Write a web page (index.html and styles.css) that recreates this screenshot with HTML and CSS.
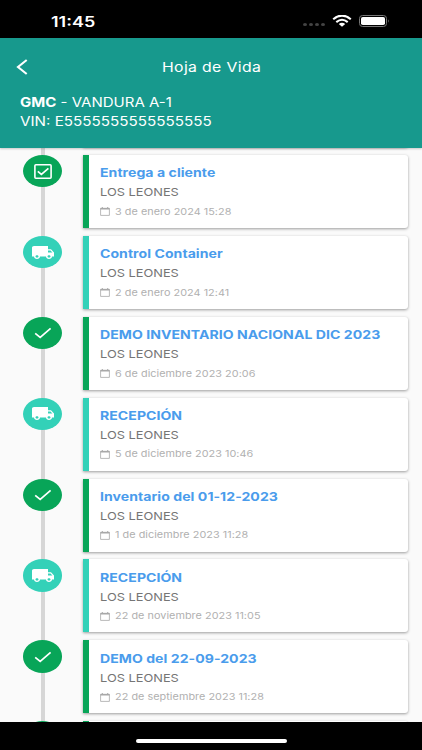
FILE: index.html
```
<!DOCTYPE html>
<html lang="es">
<head>
    <title>Hoja de Vida</title>
    <meta charset="UTF-8">
    <meta name="viewport" content="width=device-width, initial-scale=1.0">
    <link rel="stylesheet" href="styles.css">
</head>
<body>
    <!-- icons -->
    <svg class="sprite">
        <symbol id="calendar" viewBox="0 0 10 9">
            <path d="M.6 1.3h8.800v7.100H.6z" fill="none" stroke="#a8a8a8" stroke-width=".8"/>
            <path d="M.5 1h9v1.600h-9zM1.800 0h1v1.300h-1zM7.200 0h1v1.300h-1z" fill="#a8a8a8"/>
        </symbol>
        <symbol id="box" viewBox="0 0 18 15">
            <rect x=".9" y=".8" width="16.2" height="13.4" rx="1" fill="none" stroke="#fff" stroke-width="1.6"/>
            <path d="M3.800 7.400l3.600 3.100 7-6.100" fill="none" stroke="#fff" stroke-width="1.700"/>
        </symbol>
        <symbol id="check" viewBox="0 0 18 12">
            <path d="M1.200 6.300l5 4.200L16.600 1.400" fill="none" stroke="#fff" stroke-width="1.700"/>
        </symbol>
        <symbol id="truck" viewBox="1 4 22 16" preserveAspectRatio="none">
            <path fill="#fff" d="M20 8h-3V4H3c-1.100 0-2 .9-2 2v11h2c0 1.660 1.340 3 3 3s3-1.340 3-3h6c0 1.660 1.340 3 3 3s3-1.340 3-3h2v-5l-3-4zM6 18.500c-.83 0-1.500-.67-1.500-1.500s.67-1.500 1.500-1.500 1.500.67 1.500 1.500-.67 1.500-1.500 1.500zm13.500-9l1.960 2.500H17V9.500h2.500zm-1.500 9c-.83 0-1.500-.67-1.500-1.500s.67-1.500 1.500-1.500 1.500.67 1.500 1.500-.67 1.500-1.500 1.500z"/>
        </symbol>
    </svg>

    <div class="status-bar">
        <span class="clock">11:45</span>
        <div class="status-icons">
            <div class="signal"><i></i><i></i><i></i><i></i></div>
            <svg class="wifi" width="20" height="12" viewBox="0 0 20 12">
                <path d="M1.200 4.200Q10-3 18.800 4.200M4.300 7.100Q10 2.400 15.700 7.100" fill="none" stroke="#fff" stroke-width="2.100"/>
                <path d="M6.800 9Q10 6.500 13.200 9L10 11.800z" fill="#fff"/>
            </svg>
            <svg class="battery" width="31" height="12" viewBox="0 0 31 12">
                <rect x=".5" y=".5" width="27" height="11" rx="3" fill="none" stroke="#777"/>
                <rect x="2" y="2" width="24" height="8" rx="1.800" fill="#fff"/>
                <path d="M29 4.300q1.600 1.700 0 3.400z" fill="#777"/>
            </svg>
        </div>
    </div>

    <header class="header">
        <div class="nav">
            <svg class="back" width="12" height="16" viewBox="0 0 12 16">
                <path d="M10.700 1L2 8l8.700 7" fill="none" stroke="#fff" stroke-width="2.100"/>
            </svg>
            <h1>Hoja de Vida</h1>
        </div>
        <div class="vehicle">
            <p class="model"><b>GMC</b> - VANDURA A-1</p>
            <p class="vin">VIN: E5555555555555555</p>
        </div>
    </header>

    <main class="timeline">
        <div class="item">
            <div class="dot green"></div>
            <div class="card green"></div>
        </div>
        <div class="item">
            <div class="dot green"><svg width="18" height="15"><use href="#box"/></svg></div>
            <div class="card green">
                <h2>Entrega a cliente</h2>
                <p class="place">LOS LEONES</p>
                <div class="date"><svg width="10" height="9"><use href="#calendar"/></svg><span>3 de enero 2024 15:28</span></div>
            </div>
        </div>
        <div class="item">
            <div class="dot teal"><svg width="22" height="13"><use href="#truck"/></svg></div>
            <div class="card teal">
                <h2>Control Container</h2>
                <p class="place">LOS LEONES</p>
                <div class="date"><svg width="10" height="9"><use href="#calendar"/></svg><span>2 de enero 2024 12:41</span></div>
            </div>
        </div>
        <div class="item">
            <div class="dot green"><svg width="18" height="12"><use href="#check"/></svg></div>
            <div class="card green">
                <h2>DEMO INVENTARIO NACIONAL DIC 2023</h2>
                <p class="place">LOS LEONES</p>
                <div class="date"><svg width="10" height="9"><use href="#calendar"/></svg><span>6 de diciembre 2023 20:06</span></div>
            </div>
        </div>
        <div class="item">
            <div class="dot teal"><svg width="22" height="13"><use href="#truck"/></svg></div>
            <div class="card teal">
                <h2>RECEPCIÓN</h2>
                <p class="place">LOS LEONES</p>
                <div class="date"><svg width="10" height="9"><use href="#calendar"/></svg><span>5 de diciembre 2023 10:46</span></div>
            </div>
        </div>
        <div class="item">
            <div class="dot green"><svg width="18" height="12"><use href="#check"/></svg></div>
            <div class="card green">
                <h2>Inventario del 01-12-2023</h2>
                <p class="place">LOS LEONES</p>
                <div class="date"><svg width="10" height="9"><use href="#calendar"/></svg><span>1 de diciembre 2023 11:28</span></div>
            </div>
        </div>
        <div class="item">
            <div class="dot teal"><svg width="22" height="13"><use href="#truck"/></svg></div>
            <div class="card teal">
                <h2>RECEPCIÓN</h2>
                <p class="place">LOS LEONES</p>
                <div class="date"><svg width="10" height="9"><use href="#calendar"/></svg><span>22 de noviembre 2023 11:05</span></div>
            </div>
        </div>
        <div class="item">
            <div class="dot green"><svg width="18" height="12"><use href="#check"/></svg></div>
            <div class="card green">
                <h2>DEMO del 22-09-2023</h2>
                <p class="place">LOS LEONES</p>
                <div class="date"><svg width="10" height="9"><use href="#calendar"/></svg><span>22 de septiembre 2023 11:28</span></div>
            </div>
        </div>
        <div class="item">
            <div class="dot green"></div>
            <div class="card green"></div>
        </div>
    </main>

    <div class="home-bar"><div class="home-indicator"></div></div>
</body>
</html>
```
FILE: styles.css
```
* {
    box-sizing: border-box;
}
body {
    margin: 0;
    height: 750px;
    overflow: hidden;
    display: flex;
    flex-direction: column;
    background-color: #fafafa;
    font-family: 'Inter', sans-serif;
}
h1, h2, p {
    margin: 0;
}
svg {
    display: block;
    flex: none;
}
.sprite {
    position: absolute;
    width: 0;
    height: 0;
}

/* wide lettering */
.clock, h1, h2, .model, .vin, .place, .date span {
    width: max-content;
    white-space: nowrap;
    transform: scaleX(1.2);
    transform-origin: left center;
}

.status-bar {
    flex: none;
    height: 38px;
    padding: 4px 32px 0 51px;
    display: flex;
    justify-content: space-between;
    align-items: center;
    background-color: #000;
    color: #fff;
}
.clock {
    font-size: 14.5px;
    font-weight: 600;
    transform: scaleX(1.24);
}
.status-icons {
    display: flex;
    align-items: center;
}
.signal {
    display: flex;
    gap: 2px;
    margin: 7px 7px 0 0;
}
.signal i {
    width: 4px;
    height: 3px;
    border-radius: 50%;
    background-color: #444;
}
.wifi {
    margin-right: 7px;
}

.header {
    flex: none;
    height: 109.5px;
    background-color: #17998d;
    color: #fff;
    position: relative;
    z-index: 1;
    box-shadow: 0 1px 2px rgba(0, 0, 0, 0.2);
}
.nav {
    height: 55px;
    display: flex;
    align-items: center;
    padding: 2px 0 0 16px;
}
.nav h1 {
    margin-left: 133.5px;
    font-size: 13.5px;
    font-weight: 400;
    letter-spacing: 0.3px;
    transform: scaleX(1.17);
}
.vehicle {
    padding-left: 20px;
    font-size: 13px;
    line-height: 18.5px;
}
.model {
    transform: scaleX(1.155);
}
.vin {
    transform: scaleX(1.17);
}

.timeline {
    flex: 1;
    min-height: 0;
    overflow: hidden;
    padding: 0 14px 0 23px;
    background: linear-gradient(#d6d6d6, #d6d6d6) 41px 0 / 4px 100% no-repeat;
}
.item {
    display: flex;
    align-items: flex-start;
    gap: 21px;
    height: 73px;
    margin-bottom: 7.9px;
}
/* scrolled under the header */
.item:first-child {
    margin-top: -73.4px;
}
.dot {
    flex: none;
    width: 39.3px;
    height: 32.4px;
    border-radius: 50%;
    display: flex;
    align-items: center;
    justify-content: center;
}
.dot.green {
    background-color: #08a558;
}
.dot.teal {
    background-color: #33d1b8;
}
.card {
    flex: 1;
    height: 73px;
    padding: 10.3px 0 0 10.3px;
    background-color: #fff;
    border-left: 6px solid;
    border-radius: 0 3px 3px 0;
    box-shadow: 0 1px 3px rgba(0, 0, 0, 0.38);
}
.card.green {
    border-color: #08a558;
}
.card.teal {
    border-color: #33d1b8;
}
.card h2 {
    font-size: 11.8px;
    line-height: 16px;
    font-weight: 700;
    letter-spacing: 0.05px;
    color: #4a9cec;
    transform: scaleX(1.19);
}
.place {
    margin-top: 3.2px;
    font-size: 11px;
    line-height: 16px;
    color: #757575;
    transform: scaleX(1.165);
}
.date {
    margin-top: 4.3px;
    display: flex;
    align-items: center;
    gap: 5px;
    font-size: 9.2px;
    line-height: 14px;
    letter-spacing: 0.03px;
    color: #b0b0b0;
}
.date span {
    transform: scaleX(1.18);
}

.home-bar {
    flex: none;
    height: 28px;
    display: flex;
    justify-content: center;
    padding-top: 17px;
    background-color: #000;
}
.home-indicator {
    width: 151px;
    height: 4px;
    border-radius: 2px;
    background-color: #fff;
}
```
